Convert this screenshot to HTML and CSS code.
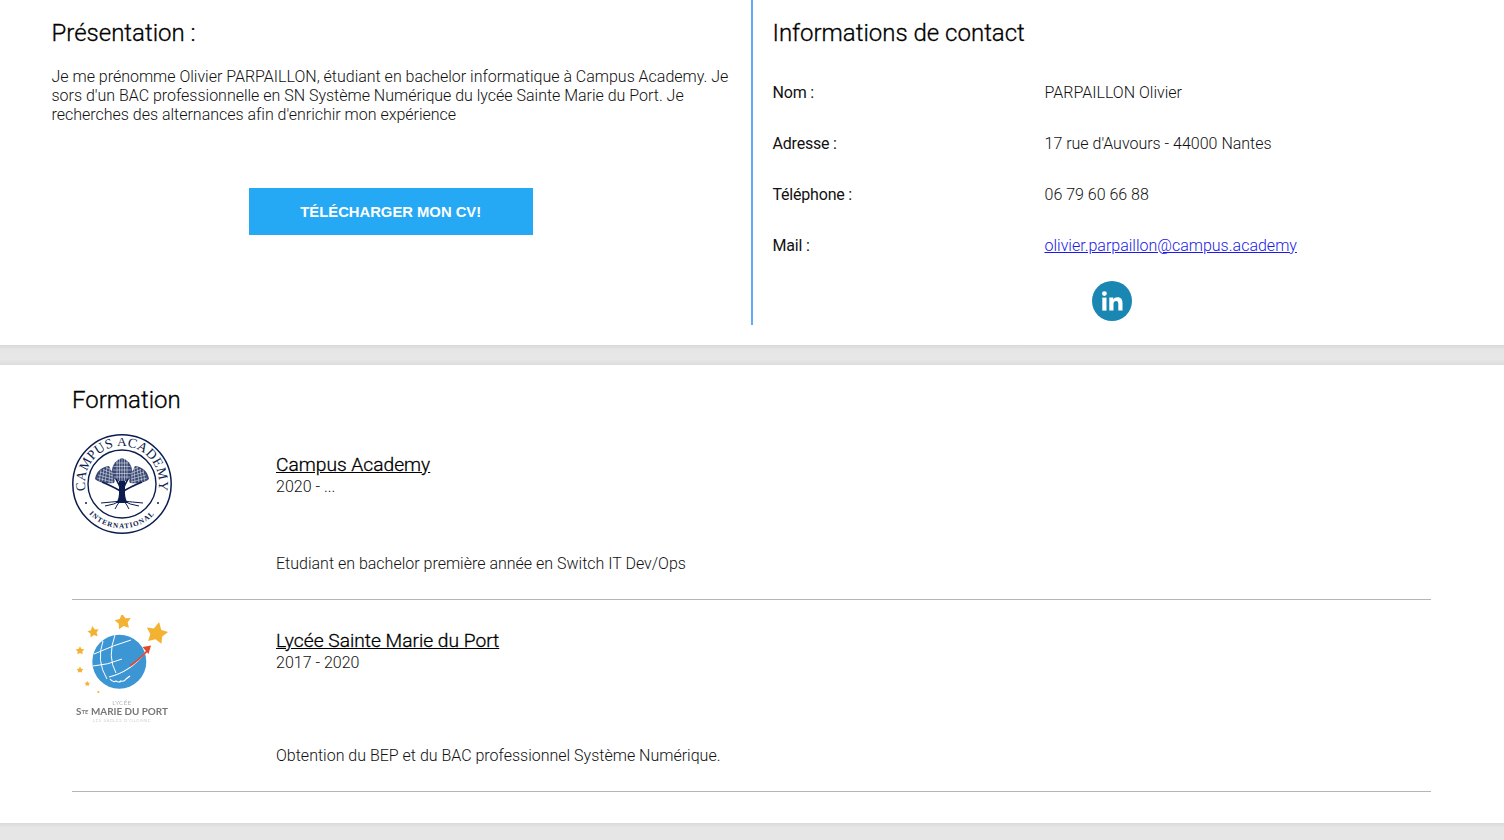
FILE: index.html
```html
<!DOCTYPE html>
<html lang="fr">
<head>
<meta charset="utf-8">
<title>Profil</title>
<link rel="stylesheet" href="styles.css">
</head>
<body>
<section class="card top">
  <div class="col-left">
    <h2 class="title">Présentation :</h2>
    <p class="intro">Je me prénomme Olivier PARPAILLON, étudiant en bachelor informatique à Campus Academy. Je sors d'un BAC professionnelle en SN Système Numérique du lycée Sainte Marie du Port. Je recherches des alternances afin d'enrichir mon expérience</p>
    <div class="cv-wrap"><a class="cv" href="#">TÉLÉCHARGER MON CV!</a></div>
  </div>
  <div class="col-right">
    <h2 class="title">Informations de contact</h2>
    <dl class="contact">
      <dt>Nom :</dt><dd>PARPAILLON Olivier</dd>
      <dt>Adresse :</dt><dd>17 rue d'Auvours - 44000 Nantes</dd>
      <dt>Téléphone :</dt><dd>06 79 60 66 88</dd>
      <dt>Mail :</dt><dd><a href="#">olivier.parpaillon@campus.academy</a></dd>
    </dl>
    <div class="social">
      <svg class="linkedin" width="40" height="40" viewBox="0 0 40 40" aria-label="LinkedIn">
        <circle cx="20" cy="20" r="20" fill="#1a87b3"/>
        <circle cx="12.4" cy="12.6" r="2.4" fill="#fff"/>
        <rect x="10.3" y="16.6" width="4.2" height="13" fill="#fff"/>
        <path d="M17.3 16.6h4v1.9c.8-1.3 2.3-2.2 4.2-2.2 3.6 0 5 2.2 5 5.9v7.4h-4.2v-6.7c0-1.9-.6-3-2.2-3-1.800 0-2.600 1.300-2.600 3.100v6.600h-4.200z" fill="#fff"/>
      </svg>
    </div>
  </div>
</section>
<div class="band gap"></div>
<section class="card formation">
  <h2 class="title">Formation</h2>
  <article class="entry first">
    <div class="logo">
      <svg width="100" height="100" viewBox="0 0 100 100" aria-label="Campus Academy International">
        <defs>
          <path id="arcTop" d="M13.200 53 A37 37 0 1 1 86.800 53"/>
          <path id="arcBottom" d="M8.500 65 A44 44 0 0 0 91.500 65"/>
        </defs>
        <circle cx="50" cy="50" r="49.200" fill="#fff" stroke="#0c1c4d" stroke-width="1.500"/>
        <circle cx="50" cy="50" r="34" fill="#fff" stroke="#0c1c4d" stroke-width="1.400"/>
        <text class="seal"><textPath href="#arcTop" startOffset="50%" text-anchor="middle">CAMPUS ACADEMY</textPath></text>
        <text class="seal-small"><textPath href="#arcBottom" startOffset="50%" text-anchor="middle">INTERNATIONAL</textPath></text>
        <circle cx="14" cy="69" r="1" fill="#0c1c4d"/>
        <circle cx="86" cy="69" r="1" fill="#0c1c4d"/>
        <g fill="#3a4a75">
          <path d="M50 24 C42 27 39 33 40 41 C42 46 46 47.500 50 47.500 C54 47.500 58 46 60 41 C61 33 58 27 50 24Z"/>
          <path d="M37 32 C29 33 24 38 23 45 C27 49 35 50 42 49 C44 47 41 42 40 38 C39 36 38 34 37 32Z"/>
          <path d="M63 32 C71 33 76 38 77 45 C73 49 65 50 58 49 C56 47 59 42 60 38 C61 36 62 34 63 32Z"/>
        </g>
        <g stroke="#fff" stroke-width=".5" fill="none" opacity=".95">
          <path d="M44 29H56M41.500 32.500H58.500M40.500 36H59.500M40.500 39.500H59.500M42 43H58M45 26V46M47.500 25V47M50 24V47.500M52.500 25V47M55 26V46"/>
          <path d="M25 44L41 48M26 41L41 45M28 38L41 42M31 35.500L40 39M34 33.500L40 36M29 36L27 48M32 35L30 49M35 33L33 49M38 34L37 49M40 38L40 49"/>
          <path d="M75 44L59 48M74 41L59 45M72 38L59 42M69 35.500L60 39M66 33.500L60 36M71 36L73 48M68 35L70 49M65 33L67 49M62 34L63 49M60 38L60 49"/>
        </g>
        <g fill="none" stroke="#0c1c4d">
          <path d="M50 58 Q42 53 30 48" stroke-width="1.800"/>
          <path d="M50 58 Q58 53 70 48" stroke-width="1.800"/>
          <path d="M44 45 Q47 50 49 56" stroke-width="1.500"/>
          <path d="M56 45 Q53 50 51 56" stroke-width="1.500"/>
          <path d="M50 67 Q40 68 29 69" stroke-width="1"/>
          <path d="M50 67 Q60 68 71 69" stroke-width="1"/>
          <path d="M50 66 Q42 71 33 72" stroke-width="1"/>
          <path d="M50 66 Q58 71 67 72" stroke-width="1"/>
          <path d="M48 67 Q45 71 43 75" stroke-width="1"/>
          <path d="M52 67 Q55 71 57 75" stroke-width="1"/>
        </g>
        <path fill="#0c1c4d" d="M47 47 L53 47 L53 60 Q53.500 66 56 69 L44 69 Q46.500 66 47 60Z"/>
      </svg>
    </div>
    <div class="body">
      <h3 class="school"><a href="#">Campus Academy</a></h3>
      <p class="years">2020 - ...</p>
      <p class="desc">Etudiant en bachelor première année en Switch IT Dev/Ops</p>
    </div>
  </article>
  <article class="entry second">
    <div class="logo">
      <svg width="100" height="110" viewBox="0 0 100 110" aria-label="Lycée Sainte Marie du Port">
        <defs>
          <filter id="soft" x="-10%" y="-10%" width="120%" height="120%"><feGaussianBlur stdDeviation=".4"/></filter>
          <polygon id="star" points="0,-10 3.300,-3.600 9.500,-3.100 5.300,1.800 5.900,8.100 0,5.200 -5.900,8.100 -5.300,1.800 -9.500,-3.100 -3.300,-3.600"/>
        </defs>
        <g filter="url(#soft)">
          <g fill="#f4b233">
            <use href="#star" transform="translate(84.700 18.300) rotate(12) scale(1.150)"/>
            <use href="#star" transform="translate(51 6.700) rotate(-8) scale(.85)"/>
            <use href="#star" transform="translate(21.300 17) rotate(-10) scale(.6)"/>
            <use href="#star" transform="translate(8 35.700) scale(.45)"/>
            <use href="#star" transform="translate(8 55) scale(.35)"/>
            <use href="#star" transform="translate(15.300 68.700) scale(.28)"/>
            <use href="#star" transform="translate(26.300 77) scale(.15)"/>
          </g>
          <circle cx="47.300" cy="46.700" r="27" fill="#3c96d4"/>
          <g fill="none" stroke="#fff" stroke-width="1">
            <path d="M22 39 Q42 30 59 25"/>
            <path d="M21 51 Q36 50 50 44"/>
            <path d="M31 26 Q24 46 35 64"/>
            <path d="M43 20 Q35 42 44 58"/>
          </g>
          <path d="M37 62 Q58 57 73 38" fill="none" stroke="#fff" stroke-width="1.200"/>
          <path d="M58 51 Q67 45 76 35" fill="none" stroke="#e0492f" stroke-width="1.800"/>
          <path d="M70.500 32 L79 30.500 L76.500 39Z" fill="#e0492f"/>
          <path d="M38 64 q3 4 6 2 q3 2 5 0 q3 1 5 -2 l4 -3" fill="none" stroke="#fff" stroke-width="1.200"/>
          <text class="ly1" x="50" y="90" text-anchor="middle">LYCÉE</text>
          <text class="ly2" x="50" y="100" text-anchor="middle">S<tspan class="ly-sup" dy="-1.500">TE</tspan><tspan dy="1.500"> MARIE DU PORT</tspan></text>
          <text class="ly3" x="50" y="106.500" text-anchor="middle">LES SABLES D'OLONNE</text>
        </g>
      </svg>
    </div>
    <div class="body">
      <h3 class="school"><a href="#">Lycée Sainte Marie du Port</a></h3>
      <p class="years">2017 - 2020</p>
      <p class="desc">Obtention du BEP et du BAC professionnel Système Numérique.</p>
    </div>
  </article>
</section>
<div class="band end"></div>
</body>
</html>
```

FILE: styles.css
```css
* { box-sizing: border-box; }
html, body { margin: 0; padding: 0; height: 840px; overflow: hidden; }
body {
  background: #fff;
  color: #111;
  font-family: Roboto, "Liberation Sans", sans-serif;
  font-weight: 300;
  font-size: 16px;
}
.card { background: #fff; }
.top { display: flex; height: 345px; align-items: flex-start; }
.title {
  margin: 0;
  font-size: 24px;
  line-height: 30px;
  font-weight: 300;
  color: #000;
  -webkit-text-stroke: .3px #000;
}
.col-left { width: 751px; height: 325px; padding: 18px 20px 0 51.500px; }
.col-right { flex: 1; height: 325px; border-left: 2px solid #64aaf8; padding: 18px 0 0 19.500px; }
.intro { margin: 19px 0 0; line-height: 19px; font-size: 16px; letter-spacing: -.01px; }
.cv-wrap { display: flex; justify-content: center; margin-top: 64px; padding-right: 1px; }
.cv {
  width: 284px;
  height: 47px;
  display: flex;
  align-items: center;
  justify-content: center;
  background: #26a9f5;
  color: #fff;
  text-decoration: none;
  font-family: "Liberation Sans", Arial, sans-serif;
  font-weight: 700;
  font-size: 14.800px;
}
.contact {
  display: grid;
  grid-template-columns: 272px 1fr;
  grid-auto-rows: 51px;
  margin: 19px 0 0;
  font-size: 16px;
  align-items: center;
}
.contact dt { font-weight: 400; letter-spacing: -.2px; }
.contact dd { margin: 0; }
.contact a { color: #1a1ae6; }
.social { padding-left: 319.500px; margin-top: 10px; height: 40px; }
.linkedin { display: block; }
.formation { height: 458px; padding: 20px 73px 0 72px; }
.entry { display: flex; border-bottom: 1px solid #b5b5b5; }
.first { height: 166px; margin-top: 19px; }
.second { height: 192px; padding-top: 15px; }
.logo { width: 204px; flex: none; }
.logo svg { display: block; }
.body { flex: 1; }
.first .body { padding-top: 19px; }
.second .body { padding-top: 14px; }
.school { margin: 0; font-size: 19.200px; line-height: 23px; font-weight: 300; -webkit-text-stroke: .3px #000; }
.school a { color: #000; }
.years { margin: 1px 0 0; line-height: 19px; font-size: 16px; }
.first .desc { margin-top: 58px; }
.second .desc { margin-top: 74px; }
.desc { margin-bottom: 0; line-height: 19px; font-size: 16px; }
.seal { font-family: "Liberation Serif", serif; font-size: 13.500px; fill: #0c1c4d; letter-spacing: .35px; }
.seal-small { font-family: "Liberation Serif", serif; font-size: 7.200px; fill: #0c1c4d; letter-spacing: 1px; font-weight: 700; }
.ly1 { font-family: Lato, sans-serif; font-size: 6.200px; fill: #777; letter-spacing: .4px; }
.ly2 { font-family: Lato, sans-serif; font-size: 9.900px; font-weight: 700; fill: #777; }
.ly-sup { font-size: 6px; }
.ly3 { font-family: Lato, sans-serif; font-size: 4.400px; fill: #b5b5b5; letter-spacing: .6px; }
.band { background: linear-gradient(#d9d9d9, #e6e6e6 25%, #e8e8e8 70%, #dcdcdc); }
.gap { height: 20px; }
.end { height: 17px; background: linear-gradient(#d9d9d9, #e6e6e6 25%, #e6e6e6); }
```
